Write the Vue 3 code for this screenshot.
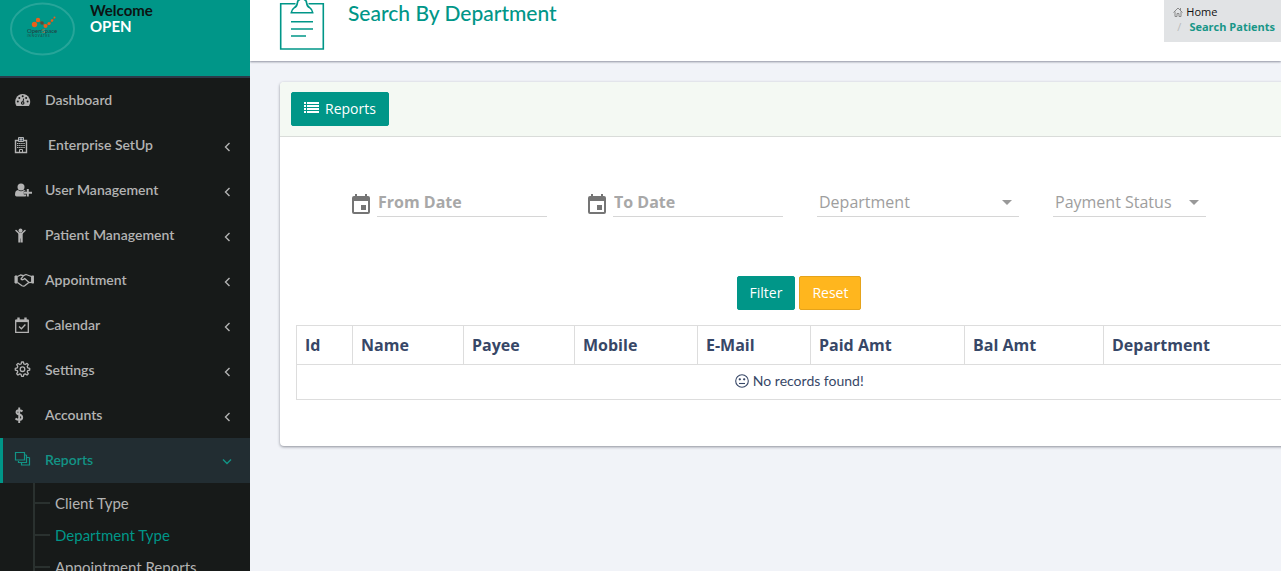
<script setup>
import { ref } from 'vue'

const menu = [
  { label: 'Dashboard', icon: 'dashboard', arrow: false },
  { label: 'Enterprise SetUp', icon: 'building', arrow: true, wide: true },
  { label: 'User Management', icon: 'user', arrow: true },
  { label: 'Patient Management', icon: 'child', arrow: true },
  { label: 'Appointment', icon: 'handshake', arrow: true },
  { label: 'Calendar', icon: 'calendar', arrow: true },
  { label: 'Settings', icon: 'gear', arrow: true },
  { label: 'Accounts', icon: 'dollar', arrow: true },
  { label: 'Reports', icon: 'stack', arrow: true, active: true }
]
const reports = ['Client Type', 'Department Type', 'Appointment Reports']
const current = 'Department Type'
const columns = ['Id', 'Name', 'Payee', 'Mobile', 'E-Mail', 'Paid Amt', 'Bal Amt', 'Department']

const fromDate = ref('')
const toDate = ref('')
const department = ref('')
const status = ref('')

function reset() {
  fromDate.value = ''
  toDate.value = ''
  department.value = ''
  status.value = ''
}
</script>

<template>
  <div class="layout">
    <aside class="sidebar">
      <div class="user">
        <svg class="logo" width="66" height="54" viewBox="0 0 66 54" role="img" aria-label="OpenSpace">
          <ellipse cx="32.500" cy="27" rx="31.500" ry="25.500" fill="none" stroke="#fff" stroke-opacity=".15" stroke-width="2" />
          <path d="M24 22 28 18l8 6 5-4 4-5" fill="none" stroke="#a8552a" stroke-width="1" />
          <g fill="#e8601c">
            <circle cx="24.500" cy="22.500" r="2.700" /><circle cx="28" cy="18" r="2.200" />
            <circle cx="32" cy="21" r="1.800" fill="#5d4a38" /><circle cx="35.500" cy="24" r="2" />
            <circle cx="39" cy="21.500" r="1.600" /><circle cx="42" cy="18.500" r="1.300" /><circle cx="44.500" cy="15.500" r="1" />
          </g>
          <text x="17" y="31" font-size="6" fill="#243b3c">Open<tspan fill="#c4602d">S</tspan>pace</text>
          <text x="17" y="35" font-size="3" fill="#243b3c">I N N O V A T E S</text>
        </svg>
        <div class="who">
          <p class="welcome">Welcome</p>
          <p class="name">OPEN</p>
        </div>
      </div>

      <nav>
        <ul class="menu">
          <li v-for="item in menu" :key="item.label">
            <a href="#" class="item" :class="{ active: item.active }">
              <svg class="icon" width="20" height="18" viewBox="0 0 20 18" fill="currentColor" aria-hidden="true">
                <g v-if="item.icon === 'dashboard'">
                  <path d="M8.700 3a7.700 7.700 0 0 0-6.500 11.500q.3.500.8.500h11.400q.5 0 .8-.5A7.700 7.700 0 0 0 8.700 3Z" />
                  <g fill="#171a19"><circle cx="3.800" cy="10.500" r="1" /><circle cx="5.300" cy="7" r="1" /><circle cx="8.700" cy="5.300" r="1" /><circle cx="12.100" cy="7" r="1" /><circle cx="13.600" cy="10.500" r="1" /><circle cx="8.700" cy="12" r="1.800" /></g>
                  <path d="m8.700 12 1-4.500" stroke="#171a19" /><circle cx="8.700" cy="12" r=".7" />
                </g>
                <g v-else-if="item.icon === 'building'">
                  <path d="M1.500 4.500h11v12h-11Z" fill="none" stroke="currentColor" stroke-width="1.400" />
                  <path d="M4.500 1.500h5v4h-5Z" fill="#3d4d5c" stroke="currentColor" />
                  <path d="M7 2v3M5.500 3.500h3" stroke="currentColor" />
                  <path d="M3 7.500h8M3 9.500h8M3 11.500h8" stroke="currentColor" stroke-dasharray="1.500 .6" fill="none" />
                  <path d="M5.500 16.500v-3h3v3" fill="none" stroke="currentColor" />
                </g>
                <g v-else-if="item.icon === 'user'">
                  <circle cx="7" cy="6" r="3.500" />
                  <path d="M4 9q3 2.400 6 0 1.300.2 2 1.200H9.800v3.300H12V15q-.4.500-1.200.5H2.600Q1 15.500 1 13.700 1 9.400 4 9Z" />
                  <path d="M12.800 8h2v2.700H18v2h-3.200v2.800h-2v-2.800H10v-2h2.800Z" />
                </g>
                <g v-else-if="item.icon === 'child'">
                  <circle cx="6.500" cy="4.500" r="2" />
                  <path d="M2 4.500 5 7.300h3l3-2.800" fill="none" stroke="currentColor" stroke-width="1.500" stroke-linecap="round" />
                  <path d="M4.300 7h4.400v9.500h-2v-4h-.4v4h-2Z" />
                </g>
                <g v-else-if="item.icon === 'handshake'" fill="none" stroke="currentColor" stroke-width="1.300" stroke-linejoin="round">
                  <path d="M1 5h2.200v7H1ZM19.800 5h-2.200v7h2.200Z" fill="currentColor" stroke-width="1" />
                  <path d="M3.500 5.500 6.500 4l3 .6L12 3.500l5.500 2M3.500 11.500l4.500 3.300q1.400.8 2.700 0l3.800-3.100 3-.3M9.500 4.700 7 8q1.600 1.700 3.700-.5l4.300 4" />
                </g>
                <g v-else-if="item.icon === 'calendar'" fill="none" stroke="currentColor" stroke-width="1.300">
                  <path d="M1.700 4.500h12.600v11.800H1.700Z" /><path d="M1.700 4.800h12.600" stroke-width="2.600" />
                  <path d="M4.500 1.500v4M11.500 1.500v4" stroke-width="2.400" /><path d="m5 10.500 2.400 2.300 4-4.300" />
                </g>
                <g v-else-if="item.icon === 'gear'" fill="none" stroke="currentColor" stroke-width="1.300" stroke-linejoin="round">
                  <path d="m7.600 1 1.800 0 .5 2 1.300.5 1.800-1.100 1.300 1.300-1.100 1.800.5 1.300 2 .5v1.800l-2 .5-.5 1.300 1.100 1.800-1.300 1.300-1.800-1.100-1.300.5-.5 2H7.600l-.5-2-1.300-.5L4 14l-1.300-1.300 1.100-1.800-.5-1.300-2-.5V7.300l2-.5.500-1.300-1.100-1.800L4 2.400l1.800 1.100L7.100 3Z" />
                  <circle cx="8.500" cy="8.200" r="2.300" />
                </g>
                <path v-else-if="item.icon === 'dollar'" d="M8.500 5.400Q6.800 4.200 5 4.200q-2.500 0-2.500 2 0 1.500 2.700 2.300 3 .8 3 3 0 2.400-3 2.400-2.200 0-3.700-1.400M5.200 1.500V17" fill="none" stroke="currentColor" stroke-width="1.900" />
                <g v-else fill="none" stroke="currentColor" stroke-width="1.200">
                  <path d="M1.500 1.500h9v7.500h-9ZM12.500 4v7.500h-8V10M10.500 4h2M15.500 6.500v7.500H7.500v-2.500M12.500 6.500h3" />
                </g>
              </svg>
              <span class="label" :class="{ wide: item.wide }">{{ item.label }}</span>
              <svg v-if="item.arrow" class="arrow" width="10" height="10" viewBox="0 0 10 10" aria-hidden="true">
                <path :d="item.active ? 'M1 2.500 5 6.500 9 2.500' : 'M7.500 1 3.500 5l4 4'" fill="none" stroke="currentColor" stroke-width="1.400" />
              </svg>
            </a>
          </li>
        </ul>
        <ul class="sub">
          <li v-for="name in reports" :key="name">
            <a href="#" :class="{ on: name === current }">{{ name }}</a>
          </li>
        </ul>
      </nav>
    </aside>

    <main class="content">
      <header class="header">
        <svg class="clip" width="46" height="52" viewBox="0 0 46 52" fill="none" stroke="#009688" stroke-width="1.600" aria-hidden="true">
          <path d="M16.500 3.700H1.700v45.300h42.600V3.700H29.500" />
          <path d="M12.300 12.700h21.400q-.4-3.300-2.800-4.800-3-1.600-3.200-4.500Q27.600-1 23-1t-4.700 4.400q-.2 2.900-3.200 4.500-2.400 1.500-2.800 4.800Z" />
          <path d="M12 21.800h22M12 29h22M12 36h15" />
        </svg>
        <h1>Search By Department</h1>
        <nav class="crumbs" aria-label="Breadcrumb">
          <a href="#">
            <svg width="10" height="10" viewBox="0 0 10 10" fill="none" stroke="#8a8a8a" aria-hidden="true"><path d="M.5 5.500 5 1l4.500 4.500M2 4.500v5h2v-3h2v3h2v-5M7.500 3V1" /></svg>
            Home
          </a>
          <p><span class="slash">/</span><strong>Search Patients</strong></p>
        </nav>
      </header>

      <section class="card">
        <div class="card-head">
          <button type="button" class="btn teal">
            <svg width="15" height="12" viewBox="0 0 15 12" fill="#fff" aria-hidden="true"><path d="M0 0h2v2H0ZM3 0h12v2H3ZM0 3h2v2H0ZM3 3h12v2H3ZM0 6h2v2H0ZM3 6h12v2H3ZM0 9h2v2H0ZM3 9h12v2H3Z" /></svg>
            Reports
          </button>
        </div>

        <form class="filters" @submit.prevent>
          <div class="fields">
            <label class="date">
              <svg width="18" height="20" viewBox="0 0 18 20" fill="#757575" aria-hidden="true"><path fill-rule="evenodd" d="M3 0h2v2h8V0h2v2h1q2 0 2 2v14q0 2-2 2H2q-2 0-2-2V4q0-2 2-2h1ZM2 7v11h14V7ZM9 11h5v5H9Z" /></svg>
              <input v-model="fromDate" type="text" placeholder="From Date" aria-label="From Date">
            </label>
            <label class="date">
              <svg width="18" height="20" viewBox="0 0 18 20" fill="#757575" aria-hidden="true"><path fill-rule="evenodd" d="M3 0h2v2h8V0h2v2h1q2 0 2 2v14q0 2-2 2H2q-2 0-2-2V4q0-2 2-2h1ZM2 7v11h14V7ZM9 11h5v5H9Z" /></svg>
              <input v-model="toDate" type="text" placeholder="To Date" aria-label="To Date">
            </label>
            <label class="pick">
              <select v-model="department" aria-label="Department"><option value="">Department</option></select>
              <svg width="10" height="5" viewBox="0 0 10 5" fill="#999" aria-hidden="true"><path d="M0 0h10L5 5Z" /></svg>
            </label>
            <label class="pick">
              <select v-model="status" aria-label="Payment Status"><option value="">Payment Status</option></select>
              <svg width="10" height="5" viewBox="0 0 10 5" fill="#999" aria-hidden="true"><path d="M0 0h10L5 5Z" /></svg>
            </label>
          </div>
          <div class="actions">
            <button type="submit" class="btn teal">Filter</button>
            <button type="button" class="btn amber" @click="reset">Reset</button>
          </div>
        </form>

        <table>
          <thead>
            <tr><th v-for="column in columns" :key="column" scope="col">{{ column }}</th></tr>
          </thead>
          <tbody>
            <tr>
              <td :colspan="columns.length">
                <svg width="14" height="14" viewBox="0 0 14 14" fill="none" stroke="#374767" stroke-width="1.100" aria-hidden="true"><circle cx="7" cy="7" r="6.300" /><path d="M4 9.500h6" /><circle cx="4.800" cy="5.300" r=".6" fill="#374767" /><circle cx="9.200" cy="5.300" r=".6" fill="#374767" /></svg>
                No records found!
              </td>
            </tr>
          </tbody>
        </table>
      </section>
    </main>
  </div>
</template>

<style>
body {
  margin: 0;
  background: #f1f3f8;
}
</style>

<style scoped>
.layout {
  display: flex;
  height: 100vh;
  overflow: hidden;
  font-family: "Open Sans", "Noto Sans", sans-serif;
  font-size: 14px;
  color: #374767;
}
* {
  box-sizing: border-box;
}
a {
  color: inherit;
  text-decoration: none;
}
p, h1, ul {
  margin: 0;
  padding: 0;
}
ul {
  list-style: none;
}
.sidebar {
  flex: 0 0 250px;
  background: #171a19;
  color: #b3b3b3;
  font-family: Lato, sans-serif;
  overflow: hidden;
}
.user {
  display: flex;
  gap: 14px;
  height: 78px;
  padding: 2px 10px;
  background: #009688;
  border-bottom: 2px solid #2c3b4a;
}
.logo {
  font-family: Lato, sans-serif;
}
.who {
  font-size: 15px;
  font-weight: 700;
  line-height: 16px;
}
.welcome {
  color: #0c1413;
}
.name {
  color: #fff;
}
.item {
  display: flex;
  align-items: center;
  height: 45px;
  padding: 0 18px 2px 11px;
  border-left: 3px solid transparent;
  font-size: 14px;
  font-weight: 600;
}
.item.active {
  background: #222d32;
  border-color: #009688;
  color: #129486;
}
.icon {
  flex: none;
  margin-right: 11px;
}
.label {
  flex: 1;
}
.wide {
  padding-left: 3px;
}
.arrow {
  margin-top: 5px;
}
.sub {
  margin-left: 33px;
  padding-top: 4px;
  border-left: 2px solid #2a312f;
  font-size: 15px;
}
.sub li {
  display: flex;
  align-items: center;
  height: 32px;
}
.sub li::before {
  content: "";
  width: 15px;
  height: 2px;
  margin-right: 5px;
  background: #2a312f;
}
.sub .on {
  color: #009688;
}
.content {
  flex: 1;
  min-width: 0;
  overflow: hidden;
}
.header {
  display: flex;
  align-items: flex-start;
  height: 61px;
  padding-left: 29px;
  background: #fff;
  box-shadow: 0 1px 2px #8e91a0;
}
.clip {
  flex: none;
}
h1 {
  flex: 1;
  padding-left: 23px;
  font: 500 21px/26px Lato, sans-serif;
  color: #009688;
}
.crumbs {
  padding: 4px 6px 8px 9px;
  background: #e1e3e5;
  font-size: 11px;
  line-height: 15px;
  color: #111;
}
.crumbs a {
  display: flex;
  align-items: center;
  gap: 3px;
}
.crumbs strong {
  color: #189688;
}
.slash {
  padding: 0 8px 0 4px;
  color: #bbb;
}
.card {
  margin: 21px -37px 0 30px;
  padding-bottom: 46px;
  background: #fff;
  border-radius: 4px;
  box-shadow: 0 1px 3px #8c8f98;
}
.card-head {
  padding: 10px 11px;
  background: #f4f9f3;
  border-bottom: 1px solid #d9dcd9;
  border-radius: 4px 4px 0 0;
}
.btn {
  display: inline-flex;
  align-items: center;
  gap: 6px;
  height: 34px;
  padding: 0 12px 2px;
  border: 1px solid #009688;
  border-radius: 2px;
  font: 14px "Open Sans", sans-serif;
  color: #fff;
}
.teal {
  background: #009688;
}
.amber {
  background: #ffb61e;
  border-color: #e5a31b;
}
.fields {
  display: grid;
  grid-template-columns: 202px 195px 202px 153px;
  column-gap: 34px;
  padding: 51px 72px 0;
}
.fields label {
  display: flex;
  align-items: center;
  height: 29px;
}
.date {
  gap: 7px;
}
.date svg {
  flex: none;
  margin-top: 3px;
}
input, select {
  width: 100%;
  min-width: 0;
  height: 29px;
  padding: 0 2px;
  border: 0;
  border-bottom: 1px solid #d6d6d6;
  border-radius: 0;
  background: transparent;
  font: 16px "Open Sans", sans-serif;
  color: #9e9e9e;
}
input {
  width: 170px;
  padding: 0 1px;
  font-weight: 700;
}
input::placeholder {
  color: #a8a8a8;
  opacity: 1;
}
select {
  appearance: none;
}
.pick svg {
  flex: none;
  margin-left: -17px;
  margin-right: 7px;
  pointer-events: none;
}
.actions {
  display: flex;
  justify-content: center;
  gap: 4px;
  padding: 59px 0 15px;
}
table {
  width: calc(100% - 31px);
  margin: 0 15px 0 16px;
  border-collapse: collapse;
  table-layout: fixed;
}
th, td {
  border: 1px solid #ddd;
  padding: 8px;
}
th {
  font-size: 16px;
  line-height: 22px;
  font-weight: 700;
  text-align: left;
}
th:nth-child(1) { width: 56px; }
th:nth-child(2), th:nth-child(3) { width: 111px; }
th:nth-child(4) { width: 123px; }
th:nth-child(5) { width: 113px; }
th:nth-child(6) { width: 154px; }
th:nth-child(7) { width: 139px; }
td {
  padding: 6px 8px 8px;
  font: 14px/20px Lato, sans-serif;
  text-align: center;
}
td svg {
  vertical-align: -2px;
}
</style>
